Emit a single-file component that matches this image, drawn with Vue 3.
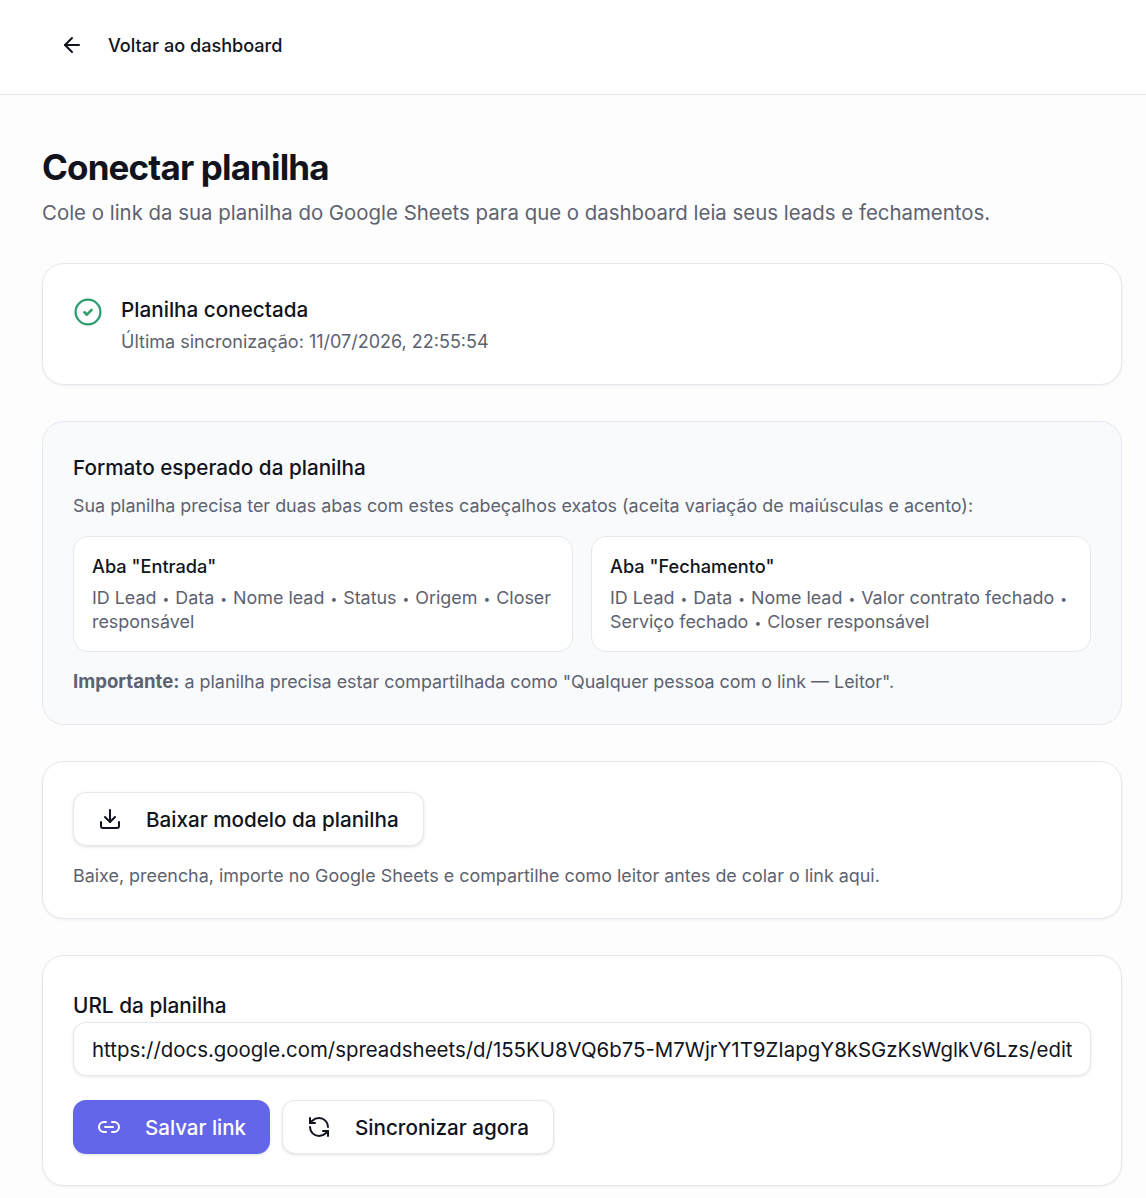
<template>
  <div class="page">
    <header class="topbar">
      <button class="back-btn">
        <svg class="icon" viewBox="0 0 24 24" fill="none" stroke="currentColor" stroke-width="2" stroke-linecap="round" stroke-linejoin="round">
          <path d="m12 19-7-7 7-7" />
          <path d="M19 12H5" />
        </svg>
        <span>Voltar ao dashboard</span>
      </button>
    </header>

    <main class="content">
      <h1 class="title">Conectar planilha</h1>
      <p class="subtitle">Cole o link da sua planilha do Google Sheets para que o dashboard leia seus leads e fechamentos.</p>

      <section class="card status-card">
        <svg class="status-icon" viewBox="0 0 28 28" fill="none" stroke="#2f9e6e" stroke-linecap="round" stroke-linejoin="round">
          <circle cx="14" cy="14" r="12.4" stroke-width="2.3" />
          <path d="m10.4 14.3 2.5 2.4 4.7-4.8" stroke-width="2.6" />
        </svg>
        <div>
          <div class="status-title">Planilha conectada</div>
          <div class="status-sub">Última sincronização: 11/07/2026, 22:55:54</div>
        </div>
      </section>

      <section class="card format-card">
        <h2 class="format-title">Formato esperado da planilha</h2>
        <p class="muted format-desc">Sua planilha precisa ter duas abas com estes cabeçalhos exatos (aceita variação de maiúsculas e acento):</p>
        <div class="tabs-grid">
          <div v-for="tab in tabs" :key="tab.name" class="tab-box">
            <div class="tab-name">{{ tab.name }}</div>
            <div class="tab-cols">
              <template v-for="(col, i) in tab.columns" :key="col">
                <span v-for="word in wordsOf(col, i)" :key="word">{{ word }}</span>
                <span v-if="i < tab.columns.length - 1" class="sep">•</span>
              </template>
            </div>
          </div>
        </div>
        <p class="muted format-note"><strong>Importante:</strong> a planilha precisa estar compartilhada como "Qualquer pessoa com o link — Leitor".</p>
      </section>

      <section class="card download-card">
        <button class="btn">
          <svg class="icon" viewBox="0 0 24 24" fill="none" stroke="currentColor" stroke-width="2" stroke-linecap="round" stroke-linejoin="round">
            <path d="M12 15V3" />
            <path d="M21 15v4a2 2 0 0 1-2 2H5a2 2 0 0 1-2-2v-4" />
            <path d="m7 10 5 5 5-5" />
          </svg>
          <span>Baixar modelo da planilha</span>
        </button>
        <p class="muted download-note">Baixe, preencha, importe no Google Sheets e compartilhe como leitor antes de colar o link aqui.</p>
      </section>

      <section class="card url-card">
        <label class="url-label" for="url">URL da planilha</label>
        <input id="url" class="url-input" type="text" :value="url" />
        <div class="actions">
          <button class="btn btn-primary">
            <svg class="icon" viewBox="0 0 24 24" fill="none" stroke="currentColor" stroke-width="2" stroke-linecap="round" stroke-linejoin="round">
              <path d="M9 17H7A5 5 0 0 1 7 7h2" />
              <path d="M15 7h2a5 5 0 1 1 0 10h-2" />
              <line x1="8" x2="16" y1="12" y2="12" />
            </svg>
            <span>Salvar link</span>
          </button>
          <button class="btn">
            <svg class="icon" viewBox="0 0 24 24" fill="none" stroke="currentColor" stroke-width="2" stroke-linecap="round" stroke-linejoin="round">
              <path d="M21 12a9 9 0 0 0-9-9 9.75 9.75 0 0 0-6.74 2.74L3 8" />
              <path d="M3 3v5h5" />
              <path d="M3 12a9 9 0 0 0 9 9 9.75 9.75 0 0 0 6.74-2.74L21 16" />
              <path d="M16 16h5v5" />
            </svg>
            <span>Sincronizar agora</span>
          </button>
        </div>
      </section>
    </main>
  </div>
</template>

<script setup>
const url = 'https://docs.google.com/spreadsheets/d/155KU8VQ6b75-M7WjrY1T9ZIapgY8kSGzKsWglkV6Lzs/edit'

const tabs = [
  {
    name: 'Aba "Entrada"',
    columns: ['ID Lead', 'Data', 'Nome lead', 'Status', 'Origem', 'Closer responsável']
  },
  {
    name: 'Aba "Fechamento"',
    columns: ['ID Lead', 'Data', 'Nome lead', 'Valor contrato fechado', 'Serviço fechado', 'Closer responsável']
  }
]

// one piece per word, keeping the spaces so the line can wrap between them
const wordsOf = (col, i) => ((i ? ' ' : '') + col + ' ').match(/\s*\S+\s*/g)
</script>

<style>
html,
body {
  margin: 0;
  background: #fdfdfe;
}
</style>

<style scoped>
.page {
  font-family: Inter, "Liberation Sans", sans-serif;
  color: #11141d;
  height: 1198px;
  overflow: hidden;
}

.topbar {
  box-sizing: border-box;
  height: 95px;
  padding: 0 0 4px 42px;
  display: flex;
  align-items: center;
  background: #fff;
  border-bottom: 1px solid #e7e8ef;
}

.back-btn {
  display: flex;
  align-items: center;
  gap: 24px;
  padding: 0 18px;
  border: 0;
  background: none;
  color: inherit;
  font: 500 18.1px Inter, sans-serif;
}

.icon {
  width: 24px;
  height: 24px;
  flex-shrink: 0;
}

.content {
  padding: 49px 24px 0 42px;
}

.title {
  margin: 0;
  font-size: 35px;
  line-height: 46px;
  font-weight: 700;
  letter-spacing: -0.85px;
}

.subtitle {
  margin: 9px 0 0;
  font-size: 20.42px;
  line-height: 28px;
  color: #5d6270;
}

.card {
  margin-top: 36px;
  padding: 30px;
  background: #fff;
  border: 1px solid #e7e8ef;
  border-radius: 22px;
  box-shadow: 0 1px 3px rgba(17, 20, 29, 0.06);
}

.status-card {
  display: flex;
  gap: 19px;
  padding: 32px 31px 29px;
}

.status-icon {
  width: 28px;
  height: 28px;
  margin-top: 2px;
  flex-shrink: 0;
}

.status-title {
  font-size: 20.7px;
  line-height: 28px;
  font-weight: 500;
}

.status-sub {
  margin-top: 5px;
  font-size: 18px;
  line-height: 26px;
  color: #5d6270;
}

.format-card {
  padding: 32px 30px 29px;
  background: #f9fafc;
  box-shadow: none;
}

.format-title {
  margin: 0;
  font-size: 20.7px;
  line-height: 28px;
  font-weight: 500;
}

.muted {
  margin: 0;
  font-size: 17.9px;
  line-height: 26px;
  color: #5d6270;
}

.muted strong {
  font-size: 18.6px;
}

.format-desc {
  margin-top: 11px;
}

.tabs-grid {
  margin-top: 17px;
  display: grid;
  grid-template-columns: 1fr 1fr;
  gap: 18px;
}

.tab-box {
  padding: 17px 18px;
  background: #fff;
  border: 1px solid #e7e8ef;
  border-radius: 15px;
}

.tab-name {
  font-size: 18.2px;
  line-height: 25px;
  font-weight: 500;
}

.tab-cols {
  margin-top: 7px;
  font-size: 17.9px;
  line-height: 24px;
  color: #5d6270;
}

.sep {
  padding: 0 1px;
  font-size: 12px;
  line-height: 1;
  vertical-align: 1.5px;
}

.format-note {
  margin-top: 16px;
}

.btn {
  display: inline-flex;
  align-items: center;
  gap: 24px;
  height: 54px;
  padding: 0 24px;
  background: #fff;
  color: inherit;
  border: 1px solid #e7e8ef;
  border-radius: 13px;
  box-shadow: 0 1px 3px rgba(17, 20, 29, 0.12);
  font: 500 20.65px Inter, sans-serif;
}

.btn-primary {
  background: #6366e8;
  border: 0;
  color: #fff;
  font-size: 20.5px;
}

.download-card {
  padding-bottom: 29px;
}

.download-note {
  margin-top: 17px;
}

.url-card {
  padding-bottom: 31px;
}

.url-label {
  display: block;
  margin-top: 6px;
  font-size: 20.8px;
  line-height: 28px;
  font-weight: 500;
}

.url-input {
  display: block;
  box-sizing: border-box;
  width: 100%;
  height: 54px;
  margin-top: 2px;
  padding: 0 18px;
  border: 1px solid #e7e8ef;
  border-radius: 13px;
  background: #fff;
  box-shadow: 0 1px 3px rgba(17, 20, 29, 0.1);
  color: inherit;
  font: 400 20.42px Inter, sans-serif;
}

.actions {
  display: flex;
  gap: 12px;
  margin-top: 24px;
}
</style>
